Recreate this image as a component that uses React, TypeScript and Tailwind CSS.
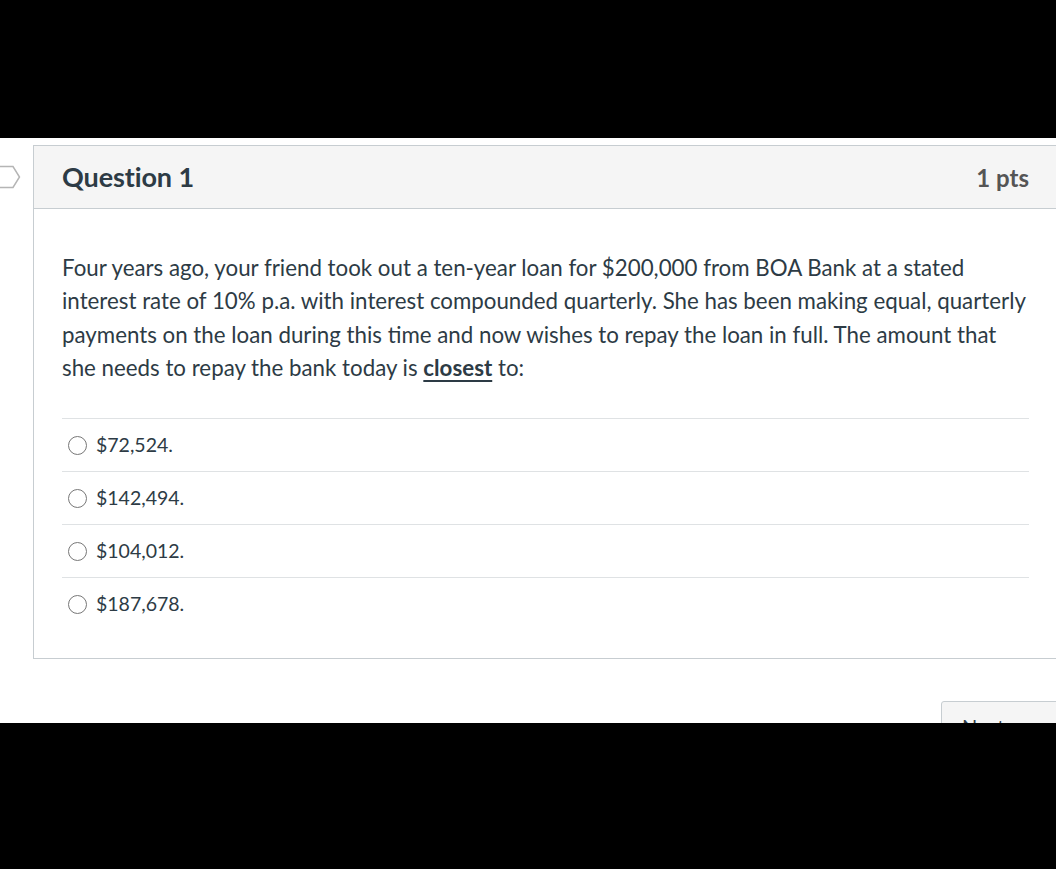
import React from 'react';

const options = ['$72,524.', '$142,494.', '$104,012.', '$187,678.'];

const App: React.FC = () => {
  return (
    <div className="w-[1056px] h-[869px] overflow-hidden bg-black" style={{ fontFamily: 'Lato, "Noto Sans", sans-serif' }}>
      <div className="h-[138px] bg-black" />
      <div className="relative h-[585px] bg-white overflow-hidden pt-[7px]">
        {/* Bookmark flag */}
        <svg className="absolute left-0 top-[27px]" width="22" height="24" viewBox="0 0 22 24">
          <path d="M-2 1.5 H13 L19.5 12 L13 22.5 H-2" fill="white" stroke="#b5b5b5" strokeWidth="1.5" />
        </svg>

        <div className="ml-[33px] w-[1024px] border border-[#c7cdd1]">
          {/* Header */}
          <div className="h-[63px] bg-[#f5f5f5] border-b border-[#c7cdd1] flex items-center justify-between pl-[28px] pr-[27px]">
            <h2 className="text-[27px] font-bold text-[#2d3b45] tracking-[-0.1px]">Question 1</h2>
            <span className="text-[24px] font-bold text-[#555555] mt-[1px]">1 pts</span>
          </div>

          {/* Body */}
          <div className="pl-[28px] pr-[27px] pt-[42px] pb-[28px]">
            <p className="text-[22.3px] leading-[33.3px] text-[#2d3b45] whitespace-nowrap">
              Four years ago, your friend took out a ten-year loan for $200,000 from BOA Bank at a stated
              <br />
              interest rate of 10% p.a. with interest compounded quarterly. She has been making equal, quarterly
              <br />
              payments on the loan during this time and now wishes to repay the loan in full. The amount that
              <br />
              she needs to repay the bank today is{' '}
              <span className="font-bold underline underline-offset-[4px] decoration-[2px]">closest</span> to:
            </p>

            <div className="mt-[34px]">
              {options.map((opt) => (
                <div key={opt} className="h-[53px] border-t border-[#dfe2e4] flex items-center pl-[6px]">
                  <span className="w-[19px] h-[19px] rounded-full border border-[#777777] bg-white shrink-0" />
                  <span className="ml-[9px] text-[19.5px] text-[#2d3b45] mt-[-1px]">{opt}</span>
                </div>
              ))}
            </div>
          </div>
        </div>

        {/* Next button, cut off */}
        <div className="absolute left-[941px] top-[563px] w-[130px] h-[44px] bg-[#f5f5f5] border border-[#c7cdd1] rounded-[3px] pl-[20px] pt-[9px] text-[20px] text-[#2d3b45]">
          Next
        </div>
      </div>
    </div>
  );
};

export default App;
